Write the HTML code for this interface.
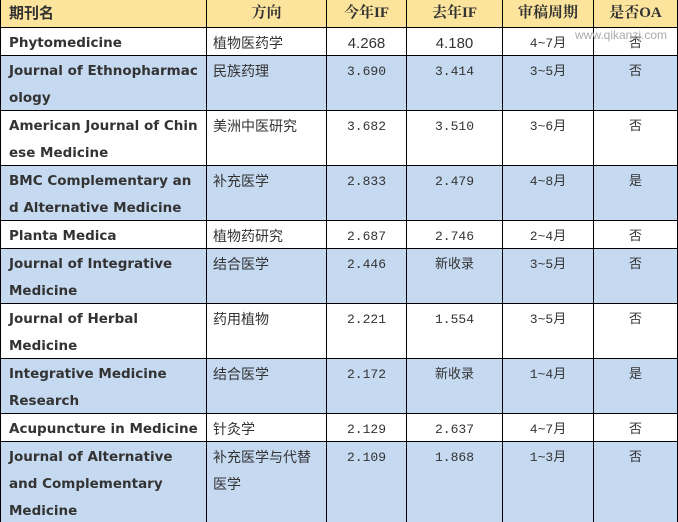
<!DOCTYPE html><html><head><meta charset="utf-8"><style>
html,body{margin:0;background:#fff;width:678px;height:522px;overflow:hidden}
body{position:relative}
table{border-collapse:collapse;table-layout:fixed;position:absolute;left:0;top:-1px}
td{border:1px solid #000;vertical-align:top;padding:0;line-height:27px;color:#333;font-size:14px;font-family:"Liberation Sans","Noto Sans CJK SC",sans-serif;overflow:hidden}
td>div{position:relative;top:2px}
td.n{font-weight:bold;font-family:"DejaVu Sans","Noto Sans CJK SC",sans-serif;font-size:13.5px;padding-left:8px;white-space:nowrap}
td.d{padding-left:6px}
td.c{text-align:center;font-family:"Liberation Mono","Noto Sans CJK SC",monospace;font-size:13px}
tr.h td{background:#fde49c;font-weight:bold;font-family:"Liberation Serif","Noto Serif CJK SC",serif;font-size:15px;text-align:center;height:27px}
tr.h td:first-child{text-align:left;padding-left:8px;font-family:"Liberation Sans","Noto Sans CJK SC",sans-serif}
tr.b td{background:#c5d9f0}
.wm{position:absolute;left:575px;top:28px;font:12px "Liberation Sans",sans-serif;color:#aaa}
</style></head><body>
<table>
<colgroup><col style="width:206px"><col style="width:120px"><col style="width:80px"><col style="width:96px"><col style="width:91px"><col style="width:84px"></colgroup>
<tr class="h"><td>期刊名</td><td>方向</td><td>今年IF</td><td>去年IF</td><td>审稿周期</td><td>是否OA</td></tr>
<tr style="height:28px"><td class="n"><div>Phytomedicine</div></td><td class="d"><div>植物医药学</div></td><td class="c" style="font-family:'Liberation Sans',sans-serif;font-size:15px"><div>4.268</div></td><td class="c" style="font-family:'Liberation Sans',sans-serif;font-size:15px"><div>4.180</div></td><td class="c"><div>4~7月</div></td><td class="c"><div>否</div></td></tr>
<tr class="b" style="height:55px"><td class="n"><div>Journal of Ethnopharmac<br>ology</div></td><td class="d"><div>民族药理</div></td><td class="c"><div>3.690</div></td><td class="c"><div>3.414</div></td><td class="c"><div>3~5月</div></td><td class="c"><div>否</div></td></tr>
<tr style="height:55px"><td class="n"><div>American Journal of Chin<br>ese Medicine</div></td><td class="d"><div>美洲中医研究</div></td><td class="c"><div>3.682</div></td><td class="c"><div>3.510</div></td><td class="c"><div>3~6月</div></td><td class="c"><div>否</div></td></tr>
<tr class="b" style="height:55px"><td class="n"><div>BMC Complementary an<br>d Alternative Medicine</div></td><td class="d"><div>补充医学</div></td><td class="c"><div>2.833</div></td><td class="c"><div>2.479</div></td><td class="c"><div>4~8月</div></td><td class="c"><div>是</div></td></tr>
<tr style="height:28px"><td class="n"><div>Planta Medica</div></td><td class="d"><div>植物药研究</div></td><td class="c"><div>2.687</div></td><td class="c"><div>2.746</div></td><td class="c"><div>2~4月</div></td><td class="c"><div>否</div></td></tr>
<tr class="b" style="height:55px"><td class="n"><div>Journal of Integrative<br>Medicine</div></td><td class="d"><div>结合医学</div></td><td class="c"><div>2.446</div></td><td class="c"><div>新收录</div></td><td class="c"><div>3~5月</div></td><td class="c"><div>否</div></td></tr>
<tr style="height:55px"><td class="n"><div>Journal of Herbal<br>Medicine</div></td><td class="d"><div>药用植物</div></td><td class="c"><div>2.221</div></td><td class="c"><div>1.554</div></td><td class="c"><div>3~5月</div></td><td class="c"><div>否</div></td></tr>
<tr class="b" style="height:55px"><td class="n"><div>Integrative Medicine<br>Research</div></td><td class="d"><div>结合医学</div></td><td class="c"><div>2.172</div></td><td class="c"><div>新收录</div></td><td class="c"><div>1~4月</div></td><td class="c"><div>是</div></td></tr>
<tr style="height:28px"><td class="n"><div>Acupuncture in Medicine</div></td><td class="d"><div>针灸学</div></td><td class="c"><div>2.129</div></td><td class="c"><div>2.637</div></td><td class="c"><div>4~7月</div></td><td class="c"><div>否</div></td></tr>
<tr class="b" style="height:85px"><td class="n"><div>Journal of Alternative<br>and Complementary<br>Medicine</div></td><td class="d"><div>补充医学与代替<br>医学</div></td><td class="c"><div>2.109</div></td><td class="c"><div>1.868</div></td><td class="c"><div>1~3月</div></td><td class="c"><div>否</div></td></tr>
</table>
<div class="wm">www.qikanzj.com</div>
</body></html>
